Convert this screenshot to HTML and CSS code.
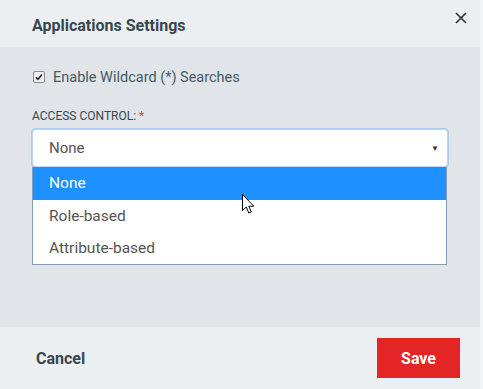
FILE: index.html
```html
<!DOCTYPE html>
<html>
<head>
<meta charset="utf-8">
<link rel="stylesheet" href="styles.css">
</head>
<body>
<div class="modal">
  <header class="modal-header">
    <h1 class="title">Applications Settings</h1>
    <span class="close" aria-label="Close">
      <svg width="12" height="12" viewBox="0 0 12 12"><path d="M1 1L11 11M11 1L1 11" stroke="#263238" stroke-width="1.6" fill="none"/></svg>
    </span>
  </header>
  <main class="modal-body">
    <label class="check-row">
      <span class="checkbox">
        <svg width="8" height="8" viewBox="0 0 8 8"><path d="M1 4.2L3 6.3L7 1.5" stroke="#222" stroke-width="1.6" fill="none"/></svg>
      </span>
      <span class="check-label">Enable Wildcard (*) Searches</span>
    </label>
    <div class="field-label">ACCESS CONTROL: <span class="req">*</span></div>
    <div class="select-wrap">
      <div class="select">
        <span class="select-value">None</span>
        <span class="arrow">▼</span>
      </div>
      <ul class="options">
        <li class="option selected">None</li>
        <li class="option">Role-based</li>
        <li class="option">Attribute-based</li>
      </ul>
      <svg class="cursor" width="13" height="21" viewBox="0 0 13 21"><path d="M0.5 0.5V16.5L4.3 13L6.8 19L9.3 18L6.8 12.2H11.8Z" fill="#fff" stroke="#000" stroke-width="1" stroke-linejoin="round"/></svg>
    </div>
  </main>
  <footer class="modal-footer">
    <button class="btn-cancel">Cancel</button>
    <button class="btn-save">Save</button>
  </footer>
</div>
</body>
</html>
```
FILE: styles.css
```css
html, body {
  margin: 0;
  padding: 0;
  height: 100%;
}
body {
  font-family: Roboto, "Liberation Sans", sans-serif;
  background: #f2f4f5;
}
.modal {
  width: 480px;
  height: 389px;
  display: flex;
  flex-direction: column;
  background: #e1e5e9;
}
.modal-header {
  height: 47px;
  background: #eceff1;
  display: flex;
  align-items: center;
  justify-content: space-between;
  padding: 0 13px 0 32px;
  box-sizing: border-box;
}
.title {
  margin: 0;
  font-size: 16px;
  font-weight: 700;
  color: #37474f;
  padding-top: 4px;
}
.close {
  display: flex;
  margin-top: -12px;
}
.modal-body {
  flex: 1;
  padding: 20px 32px 0 32px;
}
.check-row {
  display: flex;
  align-items: center;
  gap: 8px;
  height: 20px;
}
.checkbox {
  width: 10px;
  height: 10px;
  border: 1px solid #8a8a8a;
  border-radius: 2px;
  background: #f0f0f0;
  display: flex;
  align-items: center;
  justify-content: center;
  margin-left: 1px;
}
.check-label {
  font-size: 14.5px;
  color: #455a64;
}
.field-label {
  margin-top: 22px;
  font-size: 12px;
  color: #37474f;
  height: 15px;
  line-height: 15px;
}
.req {
  color: #e53935;
}
.select-wrap {
  position: relative;
  margin-top: 5px;
  width: 416px;
}
.select {
  height: 36px;
  background: #fff;
  border: 1px solid #bcd6f4;
  border-radius: 4px;
  box-shadow: 0 0 0 1px #a9cbf2;
  display: flex;
  align-items: center;
  justify-content: space-between;
  padding: 0 8px 0 16px;
}
.select-value {
  font-size: 15px;
  color: #555;
}
.arrow {
  font-size: 8px;
  color: #333;
}
.options {
  list-style: none;
  margin: 0;
  padding: 0;
  width: 415px;
  background: #fff;
  border: 1px solid #7f9db9;
  border-top: none;
  box-sizing: border-box;
}
.option {
  height: 32px;
  line-height: 32px;
  padding-left: 16px;
  font-size: 15.5px;
  color: #555;
}
.option.selected {
  background: #1e90ff;
  color: #fff;
  height: 33px;
  line-height: 33px;
}
.cursor {
  position: absolute;
  left: 210px;
  top: 65px;
}
.modal-footer {
  height: 62px;
  background: #eceff1;
  display: flex;
  align-items: center;
  justify-content: space-between;
  padding: 0 20px 0 36px;
}
.btn-cancel {
  border: none;
  background: none;
  padding: 0;
  font-family: Roboto, "Liberation Sans", sans-serif;
  font-size: 16px;
  font-weight: 700;
  color: #37474f;
}
.btn-save {
  border: none;
  background: #e32526;
  color: #fff;
  width: 83px;
  height: 40px;
  font-family: Roboto, "Liberation Sans", sans-serif;
  font-size: 16px;
  font-weight: 700;
}
```
